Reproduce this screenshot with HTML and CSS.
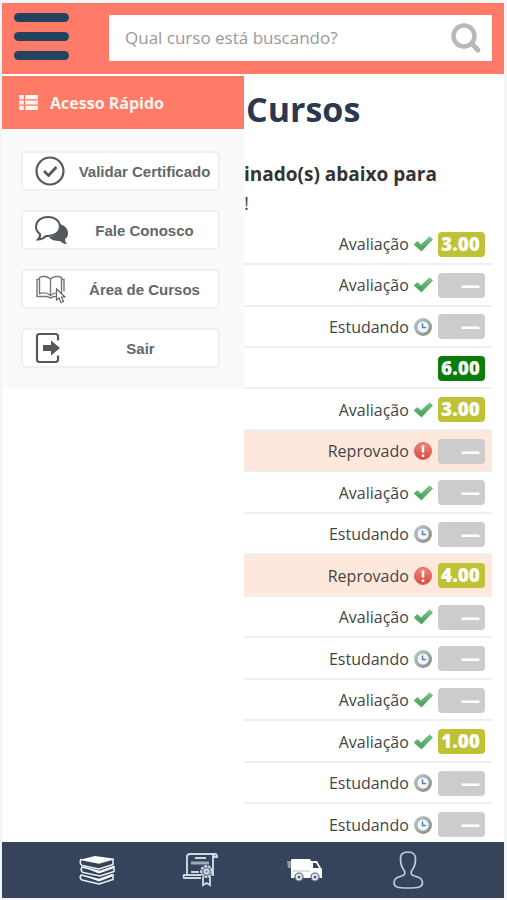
FILE: index.html
```html
<!DOCTYPE html>
<html lang="pt-BR">
<head>
<meta charset="utf-8">
<meta name="viewport" content="width=device-width, initial-scale=1">
<title>Cursos</title>
<link rel="stylesheet" href="styles.css">
</head>
<body>
<svg class="defs" aria-hidden="true">
  <defs>
    <linearGradient id="green" x1="0" y1="0" x2="0" y2="1"><stop offset="0" stop-color="#7cc68a"/><stop offset="1" stop-color="#3f9e50"/></linearGradient>
    <linearGradient id="red" x1="0" y1="0" x2="0" y2="1"><stop offset="0" stop-color="#ee8a80"/><stop offset="1" stop-color="#d9453c"/></linearGradient>
    <linearGradient id="steel" x1="0" y1="0" x2="1" y2="1"><stop offset="0" stop-color="#c3ccd6"/><stop offset="1" stop-color="#868471"/></linearGradient>
  </defs>
  <symbol id="check" viewBox="0 0 20 20"><path d="M1 10.500 4.500 7.500 8 11 16.500 3 19.500 5.500 8.500 17Z" fill="url(#green)" stroke="#5fa769" stroke-width=".8" stroke-linejoin="round"/></symbol>
  <symbol id="clock" viewBox="0 0 20 20"><circle cx="10" cy="10" r="9" fill="url(#steel)"/><circle cx="10" cy="10" r="6" fill="#f0f6fc" stroke="#a5b5c6"/><path d="M9.500 6.500v4h3.500" fill="none" stroke="#5b7fa8" stroke-width="1.500"/></symbol>
  <symbol id="alert" viewBox="0 0 20 20"><circle cx="10" cy="10" r="8.500" fill="url(#red)" stroke="#d9675e"/><path d="M10 4.500v7M10 13.500v2.500" stroke="#fff" stroke-width="2.500"/></symbol>
</svg>
<div class="page">
  <header class="topbar">
    <button class="menu" type="button" aria-label="Menu"><span></span><span></span><span></span></button>
    <form class="search">
      <input type="search" aria-label="Buscar curso" placeholder="Qual curso está buscando?">
      <button type="submit" aria-label="Buscar"><svg viewBox="0 0 32 32"><circle cx="14" cy="14" r="10.500" fill="none" stroke="#b9b9b9" stroke-width="4.500"/><path d="M22 22l6 6" stroke="#b9b9b9" stroke-width="5" stroke-linecap="round"/></svg></button>
    </form>
  </header>
  <div class="body">
    <aside class="side">
      <h2><svg viewBox="0 0 20 16"><path d="M0 0h5v4.500H0zM6.500 0H20v4.500H6.500zM0 5.800h5v4.400H0zM6.500 5.800H20v4.400H6.500zM0 11.500h5V16H0zM6.500 11.500H20V16H6.500z" fill="#fff3ee"/></svg>Acesso Rápido</h2>
      <nav class="quick">
        <a href="#"><svg viewBox="0 0 34 34"><circle cx="15" cy="17" r="13.500" fill="none" stroke="#54585c" stroke-width="2.200"/><path d="M9 17l4.500 4.500 8-8.500" fill="none" stroke="#54585c" stroke-width="2.800"/></svg><span>Validar Certificado</span></a>
        <a href="#"><svg viewBox="0 0 34 34"><path d="M24 11c6 1 9 5 9 9 0 3-1 5-3 6 0 2 1 4 2 5-3 0-5-1-7-3-5 0-9-1-11-4 7 0 12-6 10-13Z" fill="#54585c"/><path d="M13 4c7 0 12 4 12 9.500S20 23 13 23H11c-2 2-5 3.500-8 3.500 2-2 2.500-4 2-5.500-3-2-4-4.500-4-7.500C1 8 6 4 13 4Z" fill="#fff" stroke="#54585c" stroke-width="2"/></svg><span>Fale Conosco</span></a>
        <a href="#"><svg viewBox="0 0 34 34"><path d="M15.500 7C12 4 7 4 4.500 5.500v16c4-1 8-1 11 2 3-3 7-3 11-2v-16C24 4 19 4 15.500 7ZM15.500 7v16M4.500 7.500H2v17h10l3.500 1.500 3.500-1.500h4M26.500 7.500H29v12" fill="none" stroke="#777" stroke-width="1.400"/><path d="M21.500 17v11l2.500-2 2 4.500 2.500-1-2-4.500h3.500Z" fill="#fff" stroke="#666" stroke-width="1.200"/></svg><span>Área de Cursos</span></a>
        <a href="#"><svg class="narrow" viewBox="0 0 26 34"><path d="M23 9.500V5.500Q23 3 20.500 3H4.500Q2 3 2 5.500v23Q2 31 4.500 31h16Q23 31 23 28.500v-4" fill="none" stroke="#54585c" stroke-width="2.200"/><path d="M8 14h8V9.500l9 7.500-9 7.500V20H8Z" fill="#54585c"/></svg><span>Sair</span></a>
      </nav>
    </aside>
    <main class="content">
      <h1>Cursos</h1>
      <p class="lead"><strong>inado(s) abaixo para</strong> !</p>
      <table class="courses">
        <tbody>
          <tr><td>Avaliação <svg><use href="#check"/></svg></td><td><b class="low">3.00</b></td></tr>
          <tr><td>Avaliação <svg><use href="#check"/></svg></td><td><b>—</b></td></tr>
          <tr><td>Estudando <svg><use href="#clock"/></svg></td><td><b>—</b></td></tr>
          <tr><td></td><td><b class="pass">6.00</b></td></tr>
          <tr><td>Avaliação <svg><use href="#check"/></svg></td><td><b class="low">3.00</b></td></tr>
          <tr class="failed"><td>Reprovado <svg><use href="#alert"/></svg></td><td><b>—</b></td></tr>
          <tr><td>Avaliação <svg><use href="#check"/></svg></td><td><b>—</b></td></tr>
          <tr><td>Estudando <svg><use href="#clock"/></svg></td><td><b>—</b></td></tr>
          <tr class="failed"><td>Reprovado <svg><use href="#alert"/></svg></td><td><b class="low">4.00</b></td></tr>
          <tr><td>Avaliação <svg><use href="#check"/></svg></td><td><b>—</b></td></tr>
          <tr><td>Estudando <svg><use href="#clock"/></svg></td><td><b>—</b></td></tr>
          <tr><td>Avaliação <svg><use href="#check"/></svg></td><td><b>—</b></td></tr>
          <tr><td>Avaliação <svg><use href="#check"/></svg></td><td><b class="low">1.00</b></td></tr>
          <tr><td>Estudando <svg><use href="#clock"/></svg></td><td><b>—</b></td></tr>
          <tr><td>Estudando <svg><use href="#clock"/></svg></td><td><b>—</b></td></tr>
        </tbody>
      </table>
    </main>
  </div>
  <nav class="tabs">
    <a href="#" aria-label="Cursos"><svg viewBox="0 0 40 40"><g fill="#35435b" stroke="#e8edf2" stroke-width="1.600" stroke-linejoin="round"><path d="M4 25l18 4.500 14-5v5L22 34 5 30Q2 28 4 25Z"/><path d="M5 17l18 4.500 14-5v5L23 26 6 22.500Q3 20.500 5 17Z"/><path d="M4 9.500L22 13l14-4v5.500L22 19 5 15.500Q2 13 4 9.500Z"/></g><path d="M4 9.500L18 6l18 2.500-14 4.800ZM6 17l16 4.500 14-5v2l-14 5ZM5 25l17 4.500 13-5v2l-13 5Z" fill="#fff"/></svg></a>
    <a href="#" aria-label="Certificados"><svg viewBox="0 0 40 40"><g fill="none" stroke="#ced8e2" stroke-width="1.900"><path d="M6 26V7Q6 4 9 4h25q2 0 2 3h-4M32 5v13M34 4q-2 1-2 4v18M20 28H3q-1-2 0-3h17M14 8h11M10 22h8"/><path d="M10 13h18" stroke-width="3" stroke="#9eabba"/><path d="M22 27v8l3.500-2 3.500 2v-8"/><circle cx="25.500" cy="21.500" r="5.500" fill="#718198" stroke-dasharray="3 .8"/><circle cx="25.500" cy="21.500" r="2"/></g></svg></a>
    <a href="#" aria-label="Entregas"><svg viewBox="0 0 40 40"><path d="M2 11h5v7H3Z" fill="#8f9bab"/><path d="M7 9h17q2 0 2 2h6l4 7 1 1v9H6V11q0-2 1-2Z" fill="#fff"/><path d="M28 13h3l3 5h-6Z" fill="#35435b"/><path d="M7 21h18" stroke="#b9c2cc"/><g fill="#e4e9ee" stroke="#56647a" stroke-width="1.200"><circle cx="14" cy="27" r="4"/><circle cx="30" cy="27" r="4"/></g><g fill="#56647a"><circle cx="14" cy="27" r="1.500"/><circle cx="30" cy="27" r="1.500"/></g></svg></a>
    <a href="#" aria-label="Perfil"><svg viewBox="0 0 40 40"><path d="M19 2c6 0 7.500 2.500 7.500 7 0 5-1.500 9-4 12-1 3 0 4 3 5 6 1.500 8 3 8 7 0 4-4 5-14.500 5S5 37 5 33c0-4 2-5.500 7.500-7 3-1 4-2 3-5-2.500-3-4-7-4-12 0-4.500 1.500-7 7.500-7Z" fill="none" stroke="#bccbd9" stroke-width="1.700"/></svg></a>
  </nav>
</div>
</body>
</html>
```
FILE: styles.css
```css
* {
  box-sizing: border-box;
}

body {
  margin: 0;
  background: #f4f5f8;
  color: #444;
  font: 16px/24px "Open Sans", "Noto Sans", sans-serif;
}

a {
  color: inherit;
  text-decoration: none;
}

button {
  border: 0;
  padding: 0;
  background: none;
  cursor: pointer;
}

.defs {
  display: block;
  width: 0;
  height: 0;
}

.page {
  display: flex;
  flex-direction: column;
  min-height: 100vh;
  padding: 3px 3px 2px 2px;
}

.topbar {
  display: flex;
  align-items: flex-start;
  gap: 40px;
  padding: 10px 12px 13px;
  background: #ff7b68;
}

.menu {
  display: flex;
  flex-direction: column;
  gap: 10px;
  width: 55px;
}

.menu span {
  height: 9px;
  border-radius: 5px;
  background: #24435f;
}

.search {
  display: flex;
  flex: 1;
  align-items: center;
  height: 46px;
  margin-top: 2px;
  padding: 0 10px 0 16px;
  background: #fff;
}

.search input {
  flex: 1;
  min-width: 0;
  border: 0;
  padding: 0;
  outline: 0;
  background: none;
  font: 17px/24px "Open Sans", "Noto Sans", sans-serif;
}

.search input::placeholder {
  color: #999;
}

.search svg {
  display: block;
  width: 32px;
  height: 32px;
}

.body {
  display: grid;
  flex: 1;
  grid-template-columns: 242px 1fr;
  background: #fff;
}

.side {
  align-self: start;
  margin-top: 2px;
  background: #fafafa;
}

.side h2 {
  display: flex;
  align-items: center;
  gap: 12px;
  height: 53px;
  margin: 0;
  padding-left: 17px;
  background: #ff7b68;
  color: #fff3ee;
  font-size: 16px;
  font-weight: 700;
}

.side h2 svg {
  width: 19px;
  height: 15px;
}

.quick {
  display: grid;
  gap: 19px;
  padding: 22px 24px 20px 19px;
}

.quick a {
  display: flex;
  align-items: center;
  gap: 4px;
  height: 40px;
  padding: 0 2px 0 12px;
  border: 2px solid #f0f0f0;
  border-radius: 5px;
  background: #fff;
  color: #63676b;
  font: bold 15px/22px "Liberation Sans", sans-serif;
}

.quick svg {
  flex: none;
  width: 34px;
  height: 34px;
}

.quick .narrow {
  width: 26px;
}

.quick span {
  flex: 1;
  padding-top: 2px;
  text-align: center;
  white-space: nowrap;
}

.content {
  display: flex;
  flex-direction: column;
  min-width: 0;
  padding-right: 12px;
}

h1 {
  margin: 11px 0 0 2px;
  color: #2c3850;
  font-size: 34px;
  line-height: 48px;
}

.lead {
  margin: 27px 0 6px;
  font-size: 19px;
  line-height: 29px;
}

.lead strong {
  display: block;
  color: #333;
}

.courses {
  flex: 1;
  width: 100%;
  margin-bottom: -4px;
  border-collapse: collapse;
}

.courses tr {
  border-bottom: 2px solid #efefef;
}

.courses td {
  padding: 1px 7px 0 0;
  text-align: right;
  vertical-align: middle;
}

.courses td:first-child {
  padding-right: 5px;
}

.courses td:last-child {
  width: 54px;
}

.courses svg {
  width: 20px;
  height: 20px;
  vertical-align: -4px;
}

.courses b {
  display: block;
  height: 25px;
  padding-right: 5px;
  border-radius: 4px;
  background: #ccc;
  color: #fff;
  font-size: 19px;
  font-weight: 800;
  line-height: 25px;
}

.courses .low {
  background: #c0c236;
}

.courses .pass {
  background: #087d0b;
}

.courses .failed {
  background: #fee8dc;
}

.tabs {
  position: relative;
  display: grid;
  grid-template-columns: repeat(4, 104px);
  justify-content: center;
  align-items: center;
  height: 56px;
  background: #35435b;
}

.tabs a {
  display: grid;
  justify-items: center;
}

.tabs svg {
  width: 40px;
  height: 40px;
}
```
